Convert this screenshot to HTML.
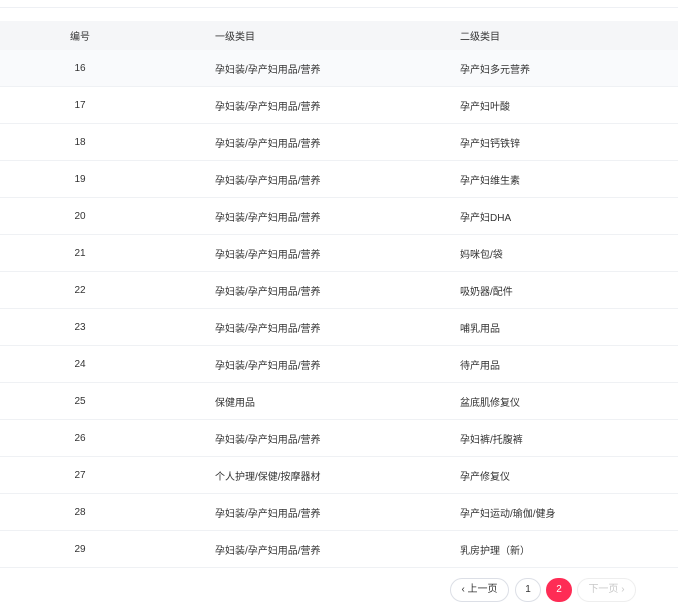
<!DOCTYPE html>
<html><head><meta charset="utf-8"><style>
body{margin:0;width:678px;height:616px;background:#fff;font-family:"Liberation Sans","Noto Sans CJK SC",sans-serif;font-size:10px;color:#333;overflow:hidden;position:relative}
.top{position:absolute;left:0;right:0;top:7px;height:1px;background:#eef0f4}
.hd{position:absolute;left:0;right:0;top:21px;height:29px;background:#f5f6f8}
.r{position:absolute;left:0;right:0;height:36px;border-bottom:1px solid #eff1f4}
.c1,.c2,.c3{position:absolute;top:0;line-height:100%;}
.row{display:flex;align-items:center;height:100%;position:relative}
.n{position:absolute;left:50px;width:60px;text-align:center}
.a{position:absolute;left:215px}
.b{position:absolute;left:460px}
.pg{position:absolute;top:578px;height:22px;border:1px solid #dcdfe6;border-radius:12px;text-align:center;line-height:22px;font-size:10px;color:#333;background:#fff}
</style></head><body>
<div class="top"></div>
<div class="hd"><div class="row"><span class="n">编号</span><span class="a">一级类目</span><span class="b">二级类目</span></div></div>
<div class="r" style="top:50px;background:#f9fafc"><div class="row"><span class="n">16</span><span class="a">孕妇装/孕产妇用品/营养</span><span class="b">孕产妇多元营养</span></div></div>
<div class="r" style="top:87px"><div class="row"><span class="n">17</span><span class="a">孕妇装/孕产妇用品/营养</span><span class="b">孕产妇叶酸</span></div></div>
<div class="r" style="top:124px"><div class="row"><span class="n">18</span><span class="a">孕妇装/孕产妇用品/营养</span><span class="b">孕产妇钙铁锌</span></div></div>
<div class="r" style="top:161px"><div class="row"><span class="n">19</span><span class="a">孕妇装/孕产妇用品/营养</span><span class="b">孕产妇维生素</span></div></div>
<div class="r" style="top:198px"><div class="row"><span class="n">20</span><span class="a">孕妇装/孕产妇用品/营养</span><span class="b">孕产妇DHA</span></div></div>
<div class="r" style="top:235px"><div class="row"><span class="n">21</span><span class="a">孕妇装/孕产妇用品/营养</span><span class="b">妈咪包/袋</span></div></div>
<div class="r" style="top:272px"><div class="row"><span class="n">22</span><span class="a">孕妇装/孕产妇用品/营养</span><span class="b">吸奶器/配件</span></div></div>
<div class="r" style="top:309px"><div class="row"><span class="n">23</span><span class="a">孕妇装/孕产妇用品/营养</span><span class="b">哺乳用品</span></div></div>
<div class="r" style="top:346px"><div class="row"><span class="n">24</span><span class="a">孕妇装/孕产妇用品/营养</span><span class="b">待产用品</span></div></div>
<div class="r" style="top:383px"><div class="row"><span class="n">25</span><span class="a">保健用品</span><span class="b">盆底肌修复仪</span></div></div>
<div class="r" style="top:420px"><div class="row"><span class="n">26</span><span class="a">孕妇装/孕产妇用品/营养</span><span class="b">孕妇裤/托腹裤</span></div></div>
<div class="r" style="top:457px"><div class="row"><span class="n">27</span><span class="a">个人护理/保健/按摩器材</span><span class="b">孕产修复仪</span></div></div>
<div class="r" style="top:494px"><div class="row"><span class="n">28</span><span class="a">孕妇装/孕产妇用品/营养</span><span class="b">孕产妇运动/瑜伽/健身</span></div></div>
<div class="r" style="top:531px"><div class="row"><span class="n">29</span><span class="a">孕妇装/孕产妇用品/营养</span><span class="b">乳房护理（新）</span></div></div>
<div class="pg" style="left:450px;width:57px">‹ 上一页</div>
<div class="pg" style="left:515px;width:24px">1</div>
<div class="pg" style="left:546px;width:24px;background:#fe2c55;border-color:#fe2c55;color:#fff">2</div>
<div class="pg" style="left:577px;width:57px;color:#c8c8c8;border-color:#eee">下一页 ›</div>
</body></html>
